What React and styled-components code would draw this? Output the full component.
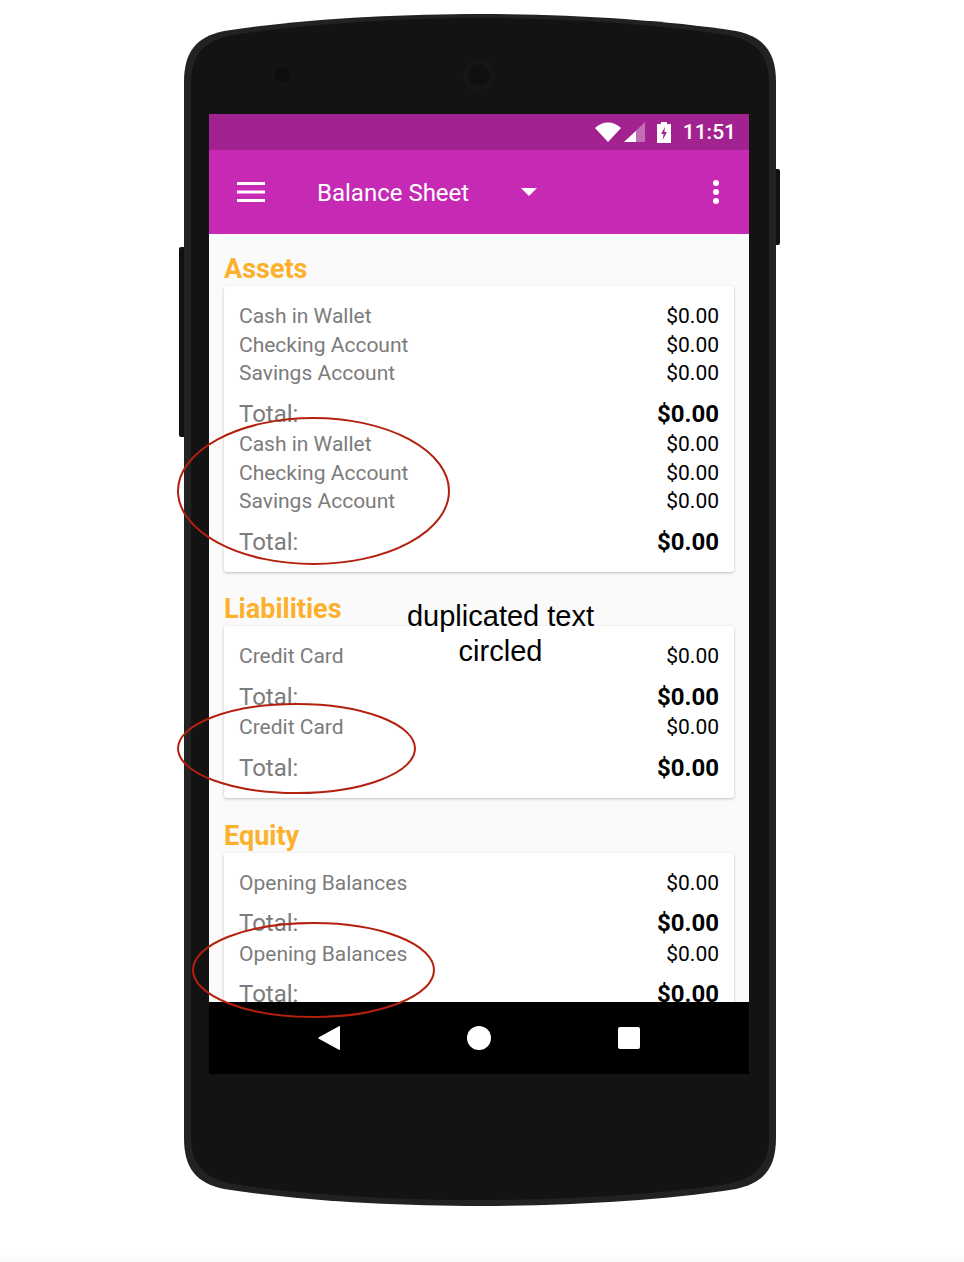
import React from 'react';
import styled, { createGlobalStyle } from 'styled-components';

const GlobalStyle = createGlobalStyle`
    html, body {
        margin: 0;
        padding: 0;
        background: #fff;
    }
`;

const Page = styled.div`
    position: relative;
    box-sizing: border-box;
    width: 964px;
    height: 1262px;
    overflow: hidden;
    padding: 14px 0 0 184px;
    background: linear-gradient(to bottom, #fff 1252px, #f9f9f9 1262px);
    font-family: Roboto, "Liberation Sans", sans-serif;
`;

const Phone = styled.div`
    position: relative;
    box-sizing: border-box;
    width: 592px;
    height: 1192px;
    padding: 100px 27px 0 25px;
`;

const ShellDrawing = styled.svg`
    position: absolute;
    left: -6px;
    top: 0;
    overflow: visible;
`;

const Screen = styled.div`
    position: relative;
    display: flex;
    flex-direction: column;
    width: 540px;
    height: 960px;
`;

const StatusBar = styled.div`
    display: flex;
    align-items: center;
    justify-content: flex-end;
    flex: 0 0 36px;
    padding-right: 13px;
    background: #a2238f;
    color: #fff;
`;

const Clock = styled.span`
    margin-left: 12px;
    font-size: 21px;
    font-weight: 500;
`;

const AppBar = styled.div`
    display: flex;
    align-items: center;
    flex: 0 0 84px;
    padding: 0 30px 0 28px;
    background: #c62ab5;
    color: #fff;
`;

const Title = styled.span`
    margin-left: 52px;
    width: 204px;
    padding-top: 2px;
    font-size: 24px;
    line-height: 28px;
`;

const MoreIcon = styled.svg`
    margin-left: auto;
`;

const Content = styled.div`
    flex: 1;
    min-height: 0;
    overflow: hidden;
    box-sizing: border-box;
    padding: 16px 15px 0;
    background: #fafafa;
`;

const Section = styled.section`
    margin-bottom: 18.25px;
`;

const Heading = styled.h2`
    margin: 0;
    height: 36px;
    font-size: 27px;
    line-height: 39px;
    font-weight: 700;
    color: #fdb02c;
`;

const Card = styled.div`
    padding: 16px 15px 14px;
    background: #fff;
    border-radius: 3px;
    box-shadow: 0 1px 3px rgba(0, 0, 0, 0.24);
`;

const Row = styled.div`
    display: flex;
    justify-content: space-between;
    height: 28.5px;
    line-height: 28.5px;
    font-size: 21px;
    color: #000;
`;

const Label = styled.span`
    color: #7c7c7c;
`;

const TotalRow = styled.div`
    display: flex;
    justify-content: space-between;
    height: 42.5px;
    padding-top: 12px;
    box-sizing: border-box;
    line-height: 29px;
    font-size: 24px;
    font-weight: 700;
    color: #000;
`;

const TotalLabel = styled.span`
    font-weight: 400;
    color: #7c7c7c;
`;

const NavBar = styled.div`
    display: flex;
    align-items: center;
    justify-content: center;
    gap: 127px;
    flex: 0 0 72px;
    background: #000;
`;

const Annotations = styled.svg`
    position: absolute;
    left: 0;
    top: 0;
    pointer-events: none;
`;

const Note = styled.div`
    position: absolute;
    left: 390px;
    top: 599px;
    width: 221px;
    font-family: "Liberation Sans", Arial, sans-serif;
    font-size: 29px;
    line-height: 35px;
    text-align: center;
    color: #000;
`;

const SECTIONS = [
    { title: 'Assets', rows: ['Cash in Wallet', 'Checking Account', 'Savings Account'] },
    { title: 'Liabilities', rows: ['Credit Card'] },
    { title: 'Equity', rows: ['Opening Balances'] },
];

const PhoneShell = () => (
    <ShellDrawing width="604" height="1192" viewBox="178 14 604 1192">
        <rect x="179" y="247" width="8" height="190" rx="2" fill="#111" />
        <rect x="773" y="169" width="7" height="76" rx="2" fill="#111" />
        <path
            d="M184 82 C184 52 196 37 224 31 C300 19 400 14 480 14 C560 14 660 19 736 31 C764 37 776 52 776 82 V1138 C776 1168 764 1183 736 1189 C660 1201 560 1206 480 1206 C400 1206 300 1201 224 1189 C196 1183 184 1168 184 1138 Z"
            fill="#222"
        />
        <path
            d="M191 84 C191 56 203 42 228 36 C300 24 400 18 480 18 C560 18 660 24 732 36 C757 42 769 56 769 84 V1136 C769 1164 757 1177 732 1183 C660 1195 560 1200 480 1200 C400 1200 300 1195 228 1183 C203 1177 191 1164 191 1136 Z"
            fill="#131313"
        />
        <circle cx="282" cy="75" r="7" fill="#0d0d0d" />
        <circle cx="479" cy="75" r="16" fill="#161616" />
        <circle cx="479" cy="75" r="11" fill="#101010" stroke="#191919" strokeWidth="2" strokeDasharray="1 2" />
    </ShellDrawing>
);

const WifiIcon = () => (
    <svg width="26" height="20" viewBox="0 0 26 20">
        <path d="M0 6 C7 -1.5 19 -1.5 26 6 L13 20 Z" fill="#fff" />
    </svg>
);

const SignalIcon = () => (
    <svg width="21" height="20" viewBox="0 0 21 20" style={{ marginLeft: 3 }}>
        <path d="M21 0 V20 H0 Z" fill="#fff" fillOpacity="0.35" />
        <path d="M12 9 V20 H0 Z" fill="#fff" />
    </svg>
);

const BatteryIcon = () => (
    <svg width="14" height="21" viewBox="0 0 14 21" style={{ marginLeft: 12 }}>
        <path
            fillRule="evenodd"
            d="M4 0 H10 V2 H14 V21 H0 V2 H4 Z M8 5 L4 12 H6.6 L5.6 18 L10 10 H7.4 Z"
            fill="#fff"
        />
    </svg>
);

const MenuIcon = () => (
    <svg width="28" height="20" viewBox="0 0 28 20">
        <path d="M0 0 H28 V3 H0 Z M0 8.5 H28 V11.5 H0 Z M0 17 H28 V20 H0 Z" fill="#fff" />
    </svg>
);

const CaretIcon = () => (
    <svg width="16" height="8" viewBox="0 0 16 8">
        <path d="M0 0 H16 L8 8 Z" fill="#fff" />
    </svg>
);

const DotsIcon = () => (
    <MoreIcon width="6" height="24" viewBox="0 0 6 24">
        <circle cx="3" cy="3" r="3" fill="#fff" />
        <circle cx="3" cy="12" r="3" fill="#fff" />
        <circle cx="3" cy="21" r="3" fill="#fff" />
    </MoreIcon>
);

const BackIcon = () => (
    <svg width="22" height="24" viewBox="0 0 22 24">
        <path d="M22 1 V23 Q22 24.5 20.5 23.6 L0.8 12.8 Q0 12 0.8 11.2 L20.5 0.4 Q22 -0.5 22 1 Z" fill="#fff" />
    </svg>
);

const HomeIcon = () => (
    <svg width="24" height="24" viewBox="0 0 24 24">
        <circle cx="12" cy="12" r="12" fill="#fff" />
    </svg>
);

const RecentsIcon = () => (
    <svg width="22" height="22" viewBox="0 0 22 22">
        <rect width="22" height="22" rx="2" fill="#fff" />
    </svg>
);

const AccountGroup = ({ rows }) => (
    <>
        {rows.map((name) => (
            <Row key={name}>
                <Label>{name}</Label>
                <span>$0.00</span>
            </Row>
        ))}
        <TotalRow>
            <TotalLabel>Total:</TotalLabel>
            <span>$0.00</span>
        </TotalRow>
    </>
);

const App = () => (
    <Page>
        <GlobalStyle />
        <Phone>
            <PhoneShell />
            <Screen>
                <StatusBar>
                    <WifiIcon />
                    <SignalIcon />
                    <BatteryIcon />
                    <Clock>11:51</Clock>
                </StatusBar>
                <AppBar>
                    <MenuIcon />
                    <Title>Balance Sheet</Title>
                    <CaretIcon />
                    <DotsIcon />
                </AppBar>
                <Content>
                    {SECTIONS.map(({ title, rows }) => (
                        <Section key={title}>
                            <Heading>{title}</Heading>
                            <Card>
                                <AccountGroup rows={rows} />
                                <AccountGroup rows={rows} />
                            </Card>
                        </Section>
                    ))}
                </Content>
                <NavBar>
                    <BackIcon />
                    <HomeIcon />
                    <RecentsIcon />
                </NavBar>
            </Screen>
        </Phone>
        <Note>duplicated text circled</Note>
        <Annotations width="964" height="1262" viewBox="0 0 964 1262">
            <g fill="none" stroke="#b3200e" strokeWidth="2">
                <ellipse cx="313.5" cy="491" rx="135.5" ry="73" />
                <ellipse cx="296.5" cy="748.5" rx="118.5" ry="44.5" />
                <ellipse cx="313.5" cy="970" rx="120.5" ry="47" />
            </g>
        </Annotations>
    </Page>
);

export default App;
